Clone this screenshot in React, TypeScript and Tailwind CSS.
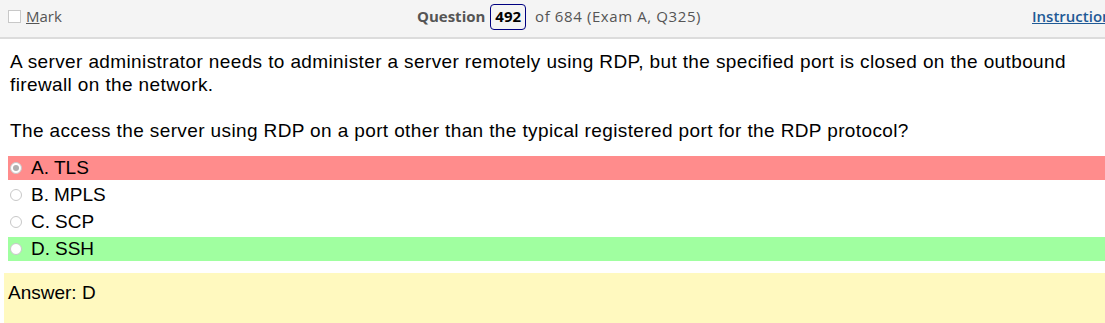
import React from "react";

const options = [
  { key: "A.", text: "TLS", bg: "bg-[#ff8c8c]", checked: true },
  { key: "B.", text: "MPLS", bg: "", checked: false },
  { key: "C.", text: "SCP", bg: "", checked: false },
  { key: "D.", text: "SSH", bg: "bg-[#a0ffa0]", checked: false },
];

function Radio({ checked }: { checked: boolean }) {
  return (
    <span className="w-[12px] h-[12px] rounded-full border border-[#c8c8c8] bg-white flex items-center justify-center shrink-0">
      {checked && <span className="w-[6px] h-[6px] rounded-full bg-[#b0b0b0]"></span>}
    </span>
  );
}

export default function App() {
  return (
    <div className="w-[1105px] h-[323px] bg-white overflow-hidden font-['Liberation_Sans',Arial,sans-serif] text-black">
      {/* header */}
      <div className="h-[39px] bg-[#f4f4f4] border-b-2 border-[#dcdcdc] flex items-center font-['Open_Sans',sans-serif] text-[15px] pb-[4px] overflow-hidden">
        <div className="w-[417px] shrink-0 flex items-center gap-[5px] pl-[8px] text-[#555]">
          <span className="w-[13px] h-[13px] border border-[#c8c8c8] bg-white"></span>
          <span>
            <span className="underline">M</span>ark
          </span>
        </div>
        <div className="flex items-center text-[#555] shrink-0">
          <span className="font-bold">Question</span>
          <span className="ml-[5px] border border-[#000080] rounded-[4px] px-[4px] h-[26px] flex items-center font-bold text-black">
            492
          </span>
          <span className="ml-[9px] whitespace-nowrap tracking-[0.6px]">of 684 (Exam A, Q325)</span>
        </div>
        <div className="flex-1"></div>
        <div className="text-[#1f5a96] font-semibold underline whitespace-nowrap w-[73px] shrink-0 overflow-hidden">
          Instructions
        </div>
      </div>

      {/* question */}
      <div className="px-[10px] pt-[11px] text-[19px] leading-[23px] tracking-[0.38px]">
        <p>
          A server administrator needs to administer a server remotely using RDP, but the specified port is closed on the outbound
          <br />
          firewall on the network.
        </p>
        <p className="mt-[23px] whitespace-nowrap">
          The access the server using RDP on a port other than the typical registered port for the RDP protocol?
        </p>
      </div>

      {/* options */}
      <div className="mt-[14px] pl-[8px] flex flex-col gap-[3px]">
        {options.map((o) => (
          <div key={o.key} className={`h-[24px] flex items-center gap-[9px] pl-[2px] text-[19px] ${o.bg}`}>
            <Radio checked={o.checked} />
            <span>
              {o.key}
              <span className="ml-[5px]">{o.text}</span>
            </span>
          </div>
        ))}
      </div>

      {/* answer */}
      <div className="mt-[12px] ml-[4px] h-[50px] bg-[#fff9bf] px-[4px] pt-[6px] text-[19px]">Answer: D</div>
    </div>
  );
}
